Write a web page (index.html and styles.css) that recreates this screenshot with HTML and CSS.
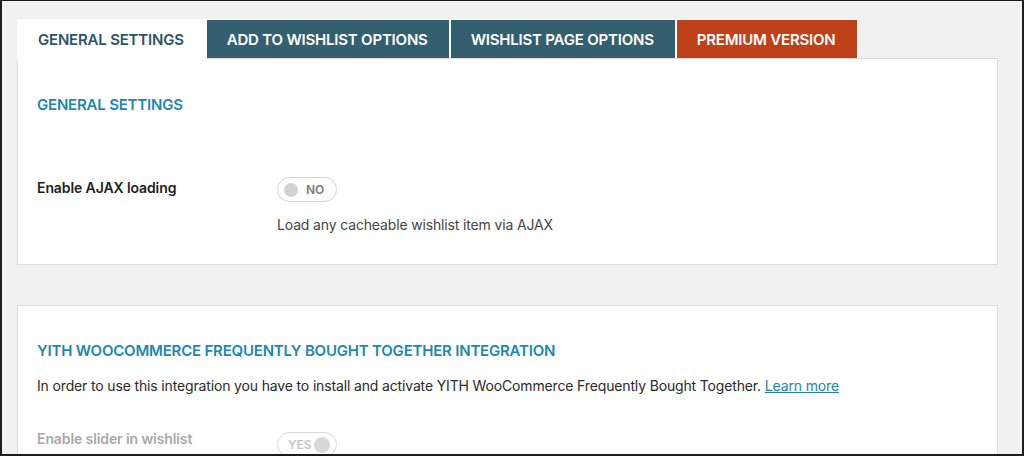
FILE: index.html
```html
<!DOCTYPE html>
<html lang="en">
<head>
  <meta charset="UTF-8">
  <meta name="viewport" content="width=device-width, initial-scale=1.0">
  <title>Wishlist Settings</title>
  <link rel="stylesheet" href="styles.css">
</head>
<body>
  <div class="wrap">
    <div class="nav-tabs">
      <a class="nav-tab active" href="#">General Settings</a>
      <a class="nav-tab" href="#">Add to Wishlist Options</a>
      <a class="nav-tab" href="#">Wishlist Page Options</a>
      <a class="nav-tab premium" href="#">Premium Version</a>
    </div>

    <div class="panel first">
      <h2 class="panel-title">General Settings</h2>
      <div class="field-row">
        <div class="field-label">Enable AJAX loading</div>
        <div class="field-control">
          <span class="toggle off">
            <span class="knob"></span>
            <span class="toggle-text">NO</span>
          </span>
          <p class="description">Load any cacheable wishlist item via AJAX</p>
        </div>
      </div>
    </div>

    <div class="panel second">
      <h2 class="panel-title">YITH WooCommerce Frequently Bought Together Integration</h2>
      <p class="panel-text">In order to use this integration you have to install and activate YITH WooCommerce Frequently Bought Together. <a href="#">Learn more</a></p>
      <div class="field-row disabled">
        <div class="field-label">Enable slider in wishlist</div>
        <div class="field-control">
          <span class="toggle on">
            <span class="toggle-text">YES</span>
            <span class="knob"></span>
          </span>
        </div>
      </div>
    </div>
  </div>
</body>
</html>
```

FILE: styles.css
```css
body {
  margin: 0;
  box-sizing: border-box;
  height: 100vh;
  overflow: hidden;
  background-color: #f1f1f1;
  border: solid #1d1d1d;
  border-width: 1px 2px 2px 2px;
  font-family: Inter, "Liberation Sans", sans-serif;
  font-size: 14px;
  color: #222;
}

.wrap {
  padding: 18px 24px 0 15px;
}

.nav-tabs {
  display: flex;
  position: relative;
  z-index: 1;
  margin-bottom: -1px;
}

.nav-tab {
  display: flex;
  align-items: center;
  height: 38px;
  padding: 0 21px 0 20px;
  border: 1px solid #fff;
  border-bottom: none;
  background-color: #345f6f;
  color: #fff;
  font-size: 15px;
  font-weight: 600;
  letter-spacing: -0.2px;
  text-transform: uppercase;
  text-decoration: none;
}

.nav-tab.active {
  background-color: #fff;
  color: #2b5566;
  height: 39px;
}

.nav-tab.premium {
  background-color: #c0401a;
}

.panel {
  background-color: #fff;
  border: 1px solid #dcdcdc;
  padding: 0 19px;
}

.panel.first {
  padding-top: 36px;
  padding-bottom: 29px;
}

.panel.second {
  box-sizing: border-box;
  margin-top: 40px;
  padding-top: 35px;
  height: 149px;
  border-bottom: none;
  overflow: hidden;
}

.panel-title {
  margin: 0;
  font-size: 15px;
  line-height: 20px;
  font-weight: 600;
  letter-spacing: -0.2px;
  color: #1b88b0;
  text-transform: uppercase;
}

.first .panel-title {
  margin-bottom: 63px;
}

.panel-text {
  margin: 15px 0 33px;
  line-height: 20px;
  letter-spacing: -0.15px;
  color: #2a2a2a;
}

.panel-text a {
  color: #1f84b0;
}

.field-row {
  display: flex;
}

.field-label {
  width: 240px;
  flex-shrink: 0;
  font-weight: 600;
  line-height: 20px;
  letter-spacing: -0.1px;
  color: #1e1e1e;
}

.field-control {
  margin-top: -1px;
}

.disabled .field-control {
  margin-top: 3px;
}

.toggle {
  display: flex;
  align-items: center;
  gap: 8px;
  box-sizing: border-box;
  width: 60px;
  height: 25px;
  padding: 0 6px;
  border: 1px solid #d4d4d4;
  border-radius: 13px;
  font-size: 12px;
  font-weight: 600;
  color: #7a7a7a;
}

.knob {
  width: 14px;
  height: 14px;
  border-radius: 50%;
  background-color: #d2d2d2;
}

.toggle.on {
  gap: 2px;
  padding-left: 10px;
  color: #c4c4c4;
  border-color: #d8d8d8;
}

.toggle.on .knob {
  width: 16px;
  height: 16px;
  background-color: #d8d8d8;
}

.description {
  margin: 13px 0 0;
  line-height: 20px;
  letter-spacing: -0.15px;
  color: #444;
}

.disabled .field-label {
  color: #a9a9a9;
}
```
